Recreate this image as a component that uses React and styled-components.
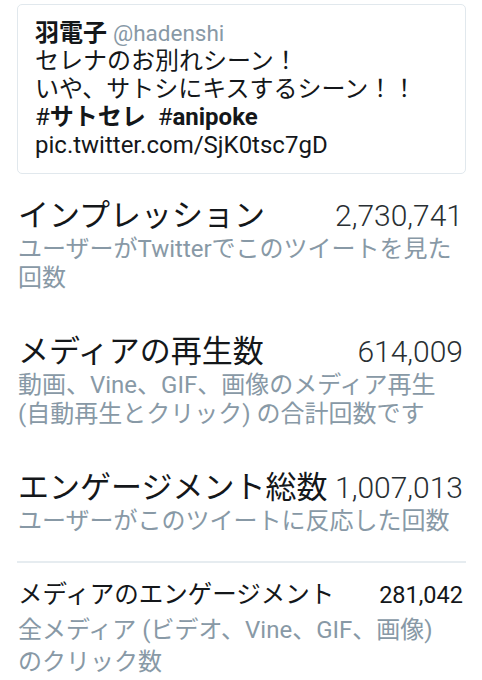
import React from "react";
import styled, { createGlobalStyle } from "styled-components";

const GlobalStyle = createGlobalStyle`
  * { box-sizing: border-box; }
  body {
    margin: 0;
    background: #ffffff;
    font-family: Roboto, "Noto Sans CJK JP", sans-serif;
    color: #14171a;
  }
`;

const stats = [
  {
    label: "インプレッション",
    value: "2,730,741",
    desc: ["ユーザーがTwitterでこのツイートを見た", "回数"],
  },
  {
    label: "メディアの再生数",
    value: "614,009",
    desc: ["動画、Vine、GIF、画像のメディア再生", "(自動再生とクリック) の合計回数です"],
  },
  {
    label: "エンゲージメント総数",
    value: "1,007,013",
    desc: ["ユーザーがこのツイートに反応した回数"],
  },
];

export default function App() {
  return (
    <>
      <GlobalStyle />
      <Page>
        <Tweet>
          <TweetLine>
            <Name>羽電子</Name> <Handle>@hadenshi</Handle>
          </TweetLine>
          <TweetLine>セレナのお別れシーン！</TweetLine>
          <TweetLine>いや、サトシにキスするシーン！！</TweetLine>
          <TweetLine>
            #<Tag>サトセレ</Tag>{"\u00a0 "}#<Tag>anipoke</Tag>
          </TweetLine>
          <TweetLine>pic.twitter.com/SjK0tsc7gD</TweetLine>
        </Tweet>

        <Stats>
          {stats.map((s) => (
            <Stat key={s.label}>
              <StatHead>
                <Label>{s.label}</Label>
                <Value>{s.value}</Value>
              </StatHead>
              <Desc>
                {s.desc.map((line) => (
                  <div key={line}>{line}</div>
                ))}
              </Desc>
            </Stat>
          ))}
        </Stats>

        <Divider />

        <Stats>
          <Stat>
            <StatHead>
              <Label small>メディアのエンゲージメント</Label>
              <Value small>281,042</Value>
            </StatHead>
            <Desc small>
              <div>全メディア (ビデオ、Vine、GIF、画像)</div>
              <div>のクリック数</div>
            </Desc>
          </Stat>
        </Stats>
      </Page>
    </>
  );
}

const Page = styled.div`
  width: 482px;
  padding: 4px 16px 0 17px;
`;

const Tweet = styled.div`
  border: 1px solid #e1e8ed;
  border-radius: 5px;
  padding: 14px 12px 14px 17px;
`;

const TweetLine = styled.div`
  font-size: 24px;
  line-height: 28px;
  color: #14171a;
  white-space: nowrap;
`;

const Name = styled.span`
  font-weight: 700;
`;

const Handle = styled.span`
  color: #8899a6;
  font-size: 22.5px;
`;

const Tag = styled.span`
  font-weight: 700;
`;

const Stats = styled.div`
  display: flex;
  flex-direction: column;
  gap: 41px;
  padding: 24px 3px 0 1px;
`;

const Stat = styled.div`
  display: flex;
  flex-direction: column;
`;

const StatHead = styled.div`
  display: flex;
  justify-content: space-between;
  align-items: baseline;
  white-space: nowrap;
`;

const Label = styled.span`
  font-size: ${(p) => (p.small ? "24.5px" : "31px")};
  line-height: ${(p) => (p.small ? "30px" : "36px")};
  color: #14171a;
`;

const Value = styled.span`
  font-size: ${(p) => (p.small ? "23.5px" : "30px")};
  font-weight: ${(p) => (p.small ? 400 : 300)};
  color: ${(p) => (p.small ? "#14171a" : "#292f33")};
`;

const Desc = styled.div`
  margin-top: ${(p) => (p.small ? "4px" : "1px")};
  font-size: 24px;
  line-height: ${(p) => (p.small ? "32px" : "29px")};
  color: #8899a6;
  white-space: nowrap;
`;

const Divider = styled.div`
  height: 2px;
  background: #e6ecf0;
  margin-top: 25px;
  margin-bottom: -7px;
`;
